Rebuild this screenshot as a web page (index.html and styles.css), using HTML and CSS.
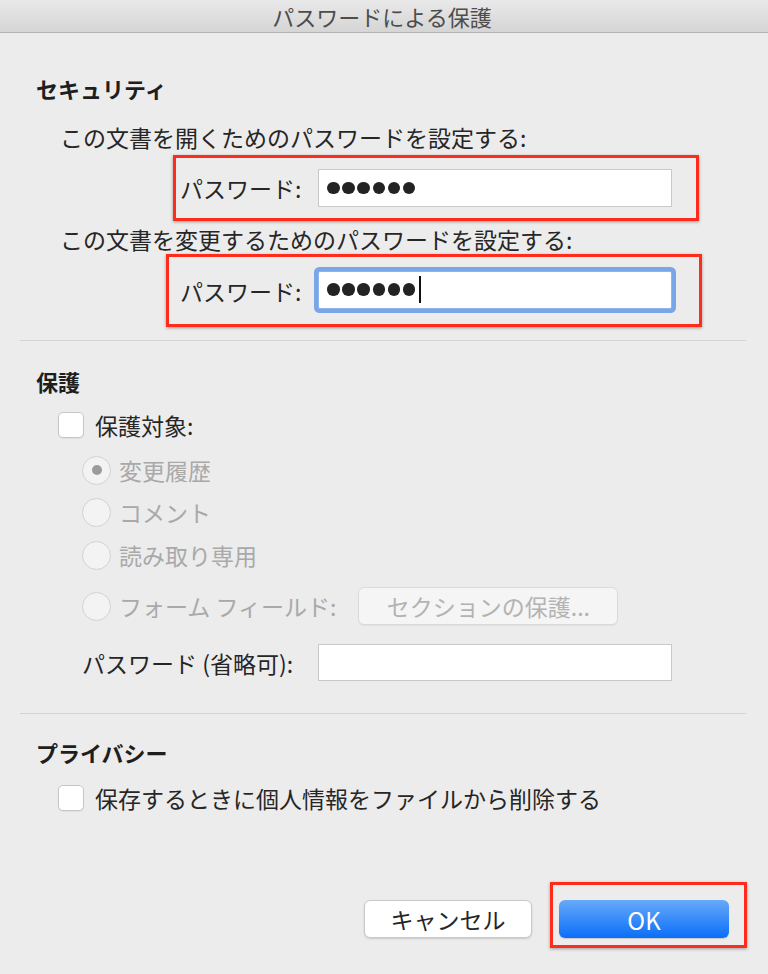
FILE: index.html
```html
<!DOCTYPE html>
<html lang="ja">
<head>
<meta charset="utf-8">
<title>パスワードによる保護</title>
<link rel="stylesheet" href="styles.css">
</head>
<body>
<div class="titlebar">パスワードによる保護</div>
<div class="content">
  <section class="sec sec-security">
    <div class="heading">セキュリティ</div>
    <div class="row label-row">この文書を開くためのパスワードを設定する:</div>
    <div class="mark mark-1">
      <span class="field-label">パスワード:</span>
      <div class="input"><span class="dots"><i></i><i></i><i></i><i></i><i></i><i></i></span></div>
    </div>
    <div class="row label-row label-row-2">この文書を変更するためのパスワードを設定する:</div>
    <div class="mark mark-2">
      <span class="field-label">パスワード:</span>
      <div class="input focused"><span class="dots"><i></i><i></i><i></i><i></i><i></i><i></i></span><span class="caret"></span></div>
    </div>
  </section>
  <hr class="sep sep-1">
  <section class="sec sec-protect">
    <div class="heading">保護</div>
    <div class="row check-row"><span class="checkbox"></span><span>保護対象:</span></div>
    <div class="row radio-row r1"><span class="radio checked"></span><span class="dis">変更履歴</span></div>
    <div class="row radio-row r2"><span class="radio"></span><span class="dis">コメント</span></div>
    <div class="row radio-row r3"><span class="radio"></span><span class="dis">読み取り専用</span></div>
    <div class="row radio-row r4"><span class="radio"></span><span class="dis">フォーム フィールド:</span><span class="btn-disabled">セクションの保護...</span></div>
    <div class="row opt-row"><span class="opt-label">パスワード (省略可):</span><div class="input input-opt"></div></div>
  </section>
  <hr class="sep sep-2">
  <section class="sec sec-privacy">
    <div class="heading">プライバシー</div>
    <div class="row check-row check-row-2"><span class="checkbox"></span><span>保存するときに個人情報をファイルから削除する</span></div>
  </section>
  <div class="actions">
    <button class="btn btn-cancel">キャンセル</button>
    <div class="mark mark-ok"><button class="btn btn-ok">OK</button></div>
  </div>
</div>
</body>
</html>
```
FILE: styles.css
```css
* { box-sizing: border-box; }
html, body { margin: 0; padding: 0; }
body {
  width: 768px;
  height: 974px;
  overflow: hidden;
  background: #ececec;
  font-family: "Noto Sans CJK JP", "Noto Sans", sans-serif;
  font-size: 23px;
  color: #262626;
}
.titlebar {
  height: 33px;
  line-height: 32px;
  text-align: center;
  color: #4d4d4d;
  font-size: 22px;
  background: linear-gradient(#e9e9e9, #d5d5d5);
  border-bottom: 1px solid #b3b3b3;
  padding-right: 4px;
  white-space: nowrap;
}
.content {
  margin: 0 22px 0 20px;
}
.row {
  height: 30px;
  line-height: 30px;
  display: flex;
  align-items: center;
  white-space: nowrap;
}
.heading {
  height: 30px;
  line-height: 30px;
  font-weight: bold;
  font-size: 22px;
  padding-left: 16px;
  color: #1e1e1e;
}
.sec-security .heading { margin-top: 40px; }
.label-row { margin-top: 19px; padding-left: 40px; }
.label-row-2 { margin-top: 3px; }
.mark {
  border: 3px solid #ff2b1b;
  box-shadow: 0 1px 3px rgba(0,0,0,0.35);
  display: flex;
  align-items: center;
}
.mark-1 {
  margin: 3px 0 0 153px;
  width: 526px;
  height: 66px;
  padding-left: 4px;
}
.mark-2 {
  margin: 0 0 0 146px;
  width: 536px;
  height: 73px;
  padding-left: 11px;
  padding-top: 1px;
}
.mark-1 .field-label, .mark-2 .field-label {
  width: 138px;
  white-space: nowrap;
}
.input {
  width: 354px;
  height: 38px;
  background: #fff;
  border: 1px solid #c9c9c9;
  display: flex;
  align-items: center;
  padding-left: 8px;
}
.input.focused {
  border-color: #8fb5ea;
  box-shadow: 0 0 0 4px #79a6e8;
  border-radius: 2px;
  margin-top: -3px;
}
.dots { display: flex; align-items: center; }
.dots i {
  display: block;
  width: 12.5px;
  height: 12.5px;
  border-radius: 50%;
  background: #232323;
  margin-right: 2.7px;
}
.caret {
  width: 2px;
  height: 27px;
  background: #111;
  margin-left: 1px;
}
.sep {
  border: 0;
  height: 1px;
  background: #d4d4d4;
  margin: 0;
}
.sep-1 { margin-top: 13px; }
.sec-protect .heading { margin-top: 25px; }
.check-row { margin-top: 14px; padding-left: 38px; }
.checkbox {
  width: 26px;
  height: 26px;
  background: #fff;
  border: 1px solid #c6c6c6;
  border-radius: 5px;
  margin-right: 11px;
  box-shadow: 0 1px 1px rgba(0,0,0,0.06);
  flex: none;
}
.radio-row { padding-left: 62px; }
.r1 { margin-top: 15px; }
.r2 { margin-top: 12px; }
.r3 { margin-top: 13px; }
.r4 { margin-top: 17px; height: 38px; }
.radio {
  width: 29px;
  height: 29px;
  border-radius: 50%;
  background: #f3f3f3;
  border: 1px solid #d2d2d2;
  margin-right: 8px;
  display: flex;
  align-items: center;
  justify-content: center;
  flex: none;
}
.radio.checked::after {
  content: "";
  width: 10px;
  height: 10px;
  border-radius: 50%;
  background: #9b9b9b;
}
.dis { color: #a9a9a9; }
.btn-disabled {
  margin-left: 22px;
  width: 260px;
  height: 38px;
  line-height: 36px;
  border: 1px solid #dadada;
  border-radius: 6px;
  background: #f5f5f5;
  color: #b3b3b3;
  text-align: center;
  box-shadow: 0 1px 1px rgba(0,0,0,0.05);
}
.opt-row { margin-top: 19px; height: 37px; padding-left: 62px; }
.opt-label { width: 236px; }
.input-opt { height: 37px; }
.sep-2 { margin-top: 32px; }
.sec-privacy .heading { margin-top: 23px; }
.check-row-2 { margin-top: 16px; }
.actions {
  margin-top: 69px;
  display: flex;
  justify-content: flex-end;
  align-items: flex-start;
  margin-right: -1px;
}
.btn {
  font-family: inherit;
  font-size: 23px;
  height: 38px;
  border-radius: 6px;
  padding: 0;
  cursor: default;
}
.btn-cancel {
  margin-top: 18px;
  width: 168px;
  background: #fff;
  border: 1px solid #c9c9c9;
  box-shadow: 0 1px 2px rgba(0,0,0,0.15);
  color: #262626;
  margin-right: 18px;
}
.mark-ok {
  width: 197px;
  height: 66px;
  padding: 15px 15px 7px 6px;
  align-items: flex-start;
}
.btn-ok {
  width: 170px;
  border: 0;
  color: #fff;
  background: linear-gradient(#67aaf9, #0b6ef8);
  box-shadow: 0 1px 1px rgba(0,0,0,0.15);
  font-size: 24px;
}
```
